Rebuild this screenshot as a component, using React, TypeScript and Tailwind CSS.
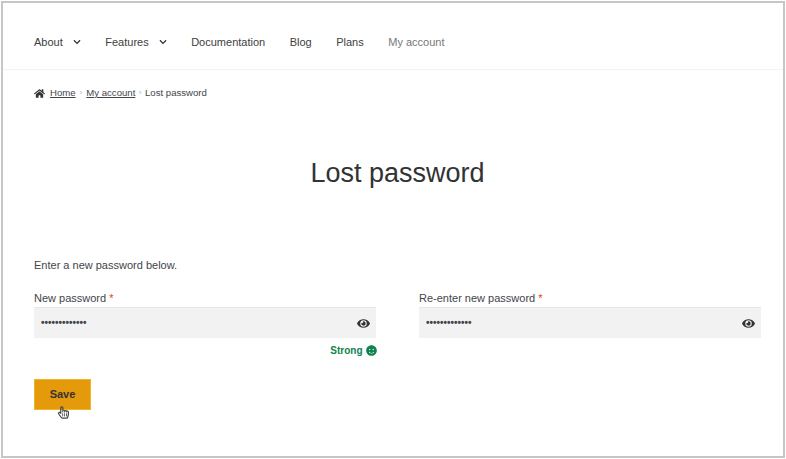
import { FaChevronDown, FaEye, FaHome, FaRegHandPointer, FaSmile } from 'react-icons/fa';

const navItems = [
  { label: 'About', caret: true },
  { label: 'Features', caret: true },
  { label: 'Documentation' },
  { label: 'Blog' },
  { label: 'Plans' },
  { label: 'My account', muted: true },
];

function PasswordField({ label }: { label: string }) {
  return (
    <div className="flex-1">
      <div className="text-[11px] leading-[13px] text-[#43454b]">
        {label} <span className="text-[#e2401c]">*</span>
      </div>
      <div className="mt-[2px] flex h-[31px] items-center justify-between border-t border-t-[#e6e6e6] bg-[#f2f2f2] pl-[7px] pr-[6px]">
        <span className="text-[10px] font-bold leading-none text-[#43454b]">•••••••••••••</span>
        <FaEye className="h-[13px] w-[13px] text-[#333333]" />
      </div>
    </div>
  );
}

export default function App() {
  return (
    <div className="h-[459px] w-[786px] bg-white p-px font-['Liberation_Sans',Arial,sans-serif]">
      <div className="h-[457px] w-[784px] border-2 border-[#c6c6c6]">
        <nav className="flex h-[67px] items-center gap-[24.5px] border-b border-b-[#f3f3f3] pl-[31px] pt-[12px] text-[11px] text-[#404040]">
          {navItems.map((item) => (
            <div key={item.label} className={item.muted ? 'flex items-center text-[#787878]' : 'flex items-center'}>
              <span>{item.label}</span>
              {item.caret && <FaChevronDown className="ml-[10px] h-[8px] w-[8px] text-[#333333]" />}
            </div>
          ))}
        </nav>

        <div className="pl-[31px] pr-[22px]">
          <div className="mt-[17px] flex items-center text-[9.6px] leading-[12px] text-[#43454b]">
            <FaHome className="mr-[5px] h-[11px] w-[11px] text-[#333333]" />
            <span className="underline">Home</span>
            <span className="mx-[4px] text-[8px] text-[#b0b0b0]">›</span>
            <span className="underline">My account</span>
            <span className="mx-[3.5px] text-[8px] text-[#b0b0b0]">›</span>
            <span>Lost password</span>
          </div>

          <h1 className="mt-[58px] text-center text-[27px] leading-[32px] text-[#333333]">Lost password</h1>

          <p className="mt-[70px] text-[11px] leading-[13px] text-[#43454b]">Enter a new password below.</p>

          <div className="mt-[20px] flex gap-[43px]">
            <PasswordField label="New password" />
            <PasswordField label="Re-enter new password" />
          </div>

          <div className="flex w-[343px] items-center justify-end gap-[3.5px] pt-[6px] text-[10px] font-bold leading-[13px] text-[#0f834d]">
            <span>Strong</span>
            <FaSmile className="h-[11px] w-[11px]" />
          </div>

          <div className="relative mt-[22px] w-[57px]">
            <button className="flex h-[31px] w-[57px] items-center justify-center border border-[#f0b429] bg-[#e49a0a] text-[11px] font-bold text-[#333333]">
              Save
            </button>
            <FaRegHandPointer className="absolute left-[24px] top-[27px] h-[13px] w-[11px] text-[#444444]" />
          </div>
        </div>
      </div>
    </div>
  );
}
